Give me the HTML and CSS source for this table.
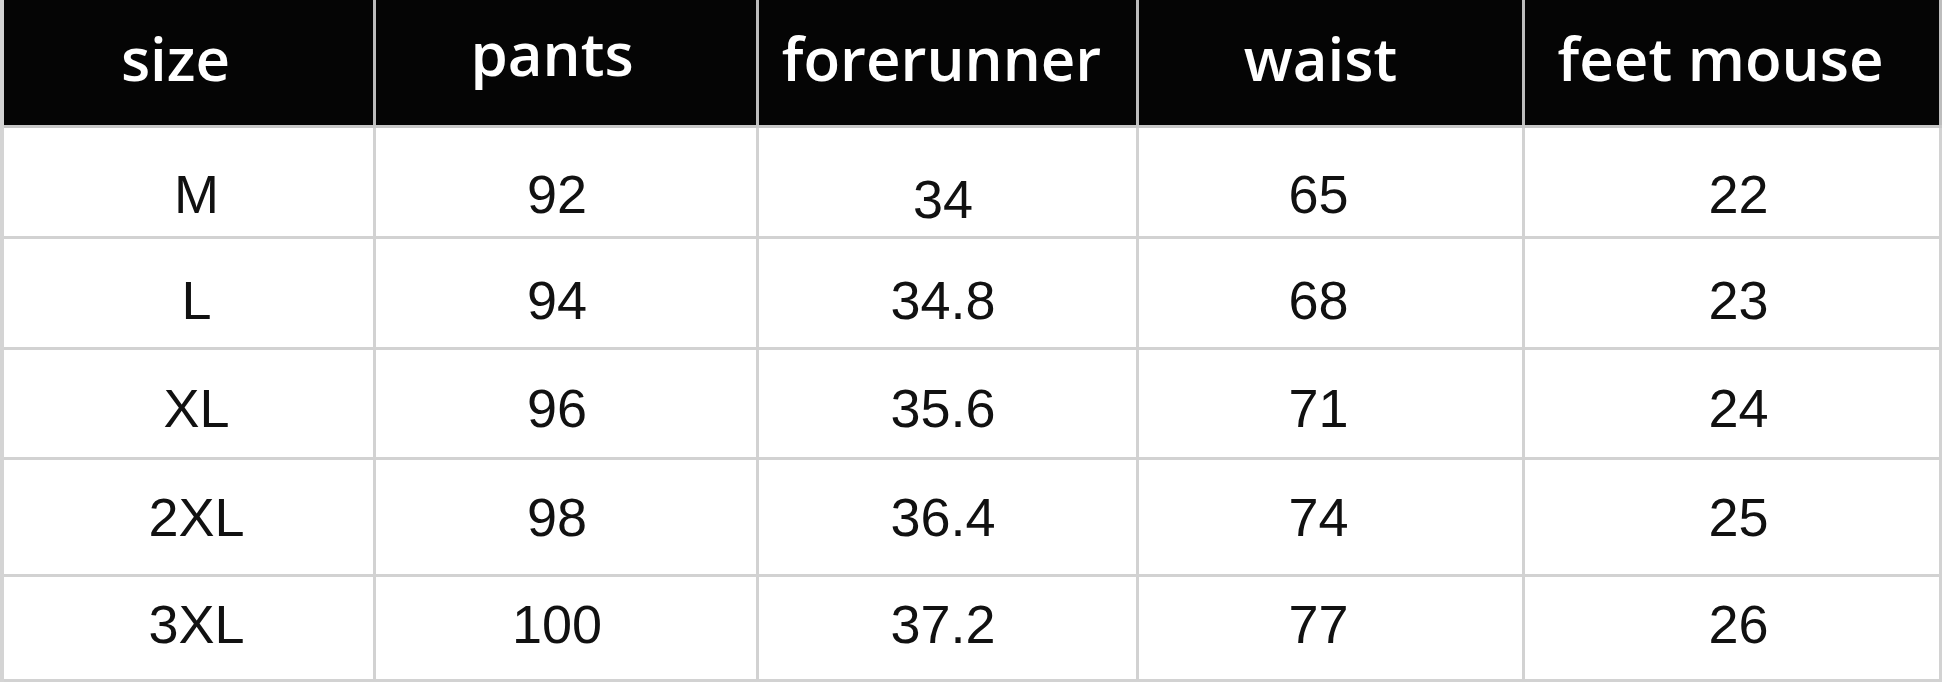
FILE: index.html
```html
<!DOCTYPE html>
<html lang="en">
<head>
<meta charset="utf-8">
<title>Size chart</title>
<link rel="stylesheet" href="styles.css">
</head>
<body>
<div class="chart">
  <div class="row head">
    <div class="cell">size</div>
    <div class="cell">pants</div>
    <div class="cell">forerunner</div>
    <div class="cell">waist</div>
    <div class="cell">feet mouse</div>
  </div>
  <div class="row r1">
    <div class="cell">M</div>
    <div class="cell">92</div>
    <div class="cell">34</div>
    <div class="cell">65</div>
    <div class="cell">22</div>
  </div>
  <div class="row r2">
    <div class="cell">L</div>
    <div class="cell">94</div>
    <div class="cell">34.8</div>
    <div class="cell">68</div>
    <div class="cell">23</div>
  </div>
  <div class="row r3">
    <div class="cell">XL</div>
    <div class="cell">96</div>
    <div class="cell">35.6</div>
    <div class="cell">71</div>
    <div class="cell">24</div>
  </div>
  <div class="row r4">
    <div class="cell">2XL</div>
    <div class="cell">98</div>
    <div class="cell">36.4</div>
    <div class="cell">74</div>
    <div class="cell">25</div>
  </div>
  <div class="row r5">
    <div class="cell">3XL</div>
    <div class="cell">100</div>
    <div class="cell">37.2</div>
    <div class="cell">77</div>
    <div class="cell">26</div>
  </div>
</div>
</body>
</html>
```

FILE: styles.css
```css
html, body {
  margin: 0;
  padding: 0;
  background: #ffffff;
}

.chart {
  width: 1938px;
  border-left: 4px solid #d4d4d4;
  display: flex;
  flex-direction: column;
}

.row {
  display: grid;
  grid-template-columns: 372px 383px 380px 386px 417px;
  border-bottom: 3px solid #d2d2d2;
  box-sizing: border-box;
}

.cell {
  display: flex;
  justify-content: center;
  align-items: flex-start;
  border-right: 3px solid #d2d2d2;
  box-sizing: border-box;
  font-family: "Liberation Sans", Arial, sans-serif;
  font-size: 54px;
  line-height: 1;
  color: #111111;
}

.head {
  height: 128px;
  background: #050505;
  border-bottom-color: #c8c8c8;
}

.head .cell {
  font-family: "Open Sans", "Noto Sans", sans-serif;
  font-weight: 600;
  font-size: 60px;
  color: #ffffff;
  padding-top: 28px;
  border-right-color: #bdbdbd;
}

.head .cell:nth-child(1) { padding-right: 26px; }
.head .cell:nth-child(2) { padding-right: 28px; padding-top: 23px; }
.head .cell:nth-child(3) { padding-right: 12px; }
.head .cell:nth-child(4) { padding-right: 20px; }
.head .cell:nth-child(5) { padding-right: 23px; }

.r1 { height: 111px; }
.r2 { height: 111px; }
.r3 { height: 110px; }
.r4 { height: 117px; }
.r5 { height: 105px; }

.r1 .cell { padding-top: 39px; }
.r2 .cell { padding-top: 34px; }
.r3 .cell { padding-top: 31px; }
.r4 .cell { padding-top: 30px; }
.r5 .cell { padding-top: 20px; }

.row:not(.head) .cell:nth-child(1) { padding-left: 16px; }
.row:not(.head) .cell:nth-child(2) { padding-right: 18px; }
.row:not(.head) .cell:nth-child(3) { padding-right: 9px; }
.r1 .cell:nth-child(3) { padding-top: 44px; }
.row:not(.head) .cell:nth-child(4) { padding-right: 24px; }
.row:not(.head) .cell:nth-child(5) { padding-left: 13px; }
```
